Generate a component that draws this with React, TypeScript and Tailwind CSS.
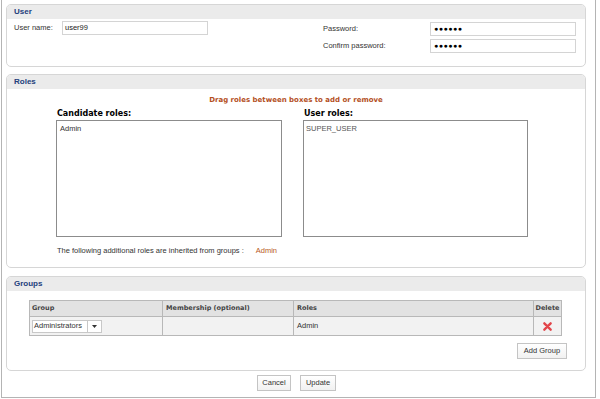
import React from "react";

const font = { fontFamily: '"Liberation Sans", Arial, sans-serif' };
const boldFont = { fontFamily: '"DejaVu Sans", Verdana, sans-serif' };

function Panel({ title, children, className }: { title: string; children: React.ReactNode; className?: string }) {
  return (
    <div className={"w-[580px] rounded-[5px] border border-[#d6d6d6] overflow-hidden bg-white " + (className || "")}>
      <div className="h-[14px] bg-[#ebebeb] flex items-center pl-[7px]">
        <span className="text-[8px] font-bold text-[#23407c] leading-none">{title}</span>
      </div>
      {children}
    </div>
  );
}

function Btn({ label, w }: { label: string; w: string }) {
  return (
    <div className={"h-[16px] border border-[#c4c4c4] bg-gradient-to-b from-white to-[#f1f1f1] flex items-center justify-center text-[7.5px] text-[#333] " + w}>
      {label}
    </div>
  );
}

export default function App() {
  return (
    <div className="w-[600px] h-[399px] bg-white overflow-hidden" style={font}>
      <div className="ml-[1px] w-[595px] h-[398px] border-l border-r border-b border-[#b4b4b4] pl-[4px] pt-[4px]">
        {/* User */}
        <Panel title="User" className="h-[63px]">
          <div className="flex pl-[7px] pt-[2px] text-[7.5px] text-[#333]">
            <div className="flex items-start w-[309px]">
              <span className="w-[48px] pt-[2px] leading-[10px]">User name:</span>
              <div className="w-[146px] h-[14px] border border-[#d4d4d4] flex items-center pl-[2px] text-[#222]">user99</div>
            </div>
            <div className="flex flex-col gap-[3px] pt-[1px]">
              <div className="flex items-center">
                <span className="w-[107px]">Password:</span>
                <div className="w-[146px] h-[14px] border border-[#d4d4d4] flex items-center pl-[3px] text-[7px] font-bold text-black tracking-[0.5px]">●●●●●●</div>
              </div>
              <div className="flex items-center">
                <span className="w-[107px]">Confirm password:</span>
                <div className="w-[146px] h-[14px] border border-[#d4d4d4] flex items-center pl-[3px] text-[7px] font-bold text-black tracking-[0.5px]">●●●●●●</div>
              </div>
            </div>
          </div>
        </Panel>

        {/* Roles */}
        <Panel title="Roles" className="h-[194px] mt-[7px]">
          <div className="text-center pt-[8px] text-[7px] font-bold text-[#b4501e] leading-none" style={boldFont}>
            Drag roles between boxes to add or remove
          </div>
          <div className="flex pl-[49px] pt-[5px] gap-[21px]">
            <div className="flex flex-col">
              <span className="text-[8px] font-bold text-black leading-[9px] pl-[1px]" style={boldFont}>Candidate roles:</span>
              <div className="mt-[2px] w-[226px] h-[117px] border border-[#8c8c8c] pl-[3px] pt-[4px] text-[7.5px] text-[#333] leading-none">Admin</div>
            </div>
            <div className="flex flex-col">
              <span className="text-[8px] font-bold text-black leading-[9px] pl-[1px]" style={boldFont}>User roles:</span>
              <div className="mt-[2px] w-[225px] h-[117px] border border-[#8c8c8c] pl-[2px] pt-[4px] text-[7.5px] text-[#555] leading-none">SUPER_USER</div>
            </div>
          </div>
          <div className="pl-[50px] pt-[10px] text-[7.5px] text-[#333] flex leading-none">
            <span>The following additional roles are inherited from groups :</span>
            <span className="ml-[12px] text-[#b85a22]">Admin</span>
          </div>
        </Panel>

        {/* Groups */}
        <Panel title="Groups" className="h-[95px] mt-[8px]">
          <div className="pl-[22px] pt-[9px]">
            <div className="w-[533px] border border-[#b8b8b8] text-[7.5px]">
              <div className="flex h-[16px] bg-[#e2e2e2] border-b border-[#b8b8b8] font-bold text-[#444] text-[6.5px]" style={boldFont}>
                <div className="w-[133px] border-r border-[#b8b8b8] flex items-center pl-[2px]">Group</div>
                <div className="w-[131px] border-r border-[#b8b8b8] flex items-center pl-[3px]">Membership (optional)</div>
                <div className="w-[240px] border-r border-[#b8b8b8] flex items-center pl-[3px]">Roles</div>
                <div className="flex-1 flex items-center justify-center">Delete</div>
              </div>
              <div className="flex h-[18px] bg-[#f2f2f2] text-[#333]">
                <div className="w-[133px] border-r border-[#b8b8b8] flex items-center pl-[2px]">
                  <div className="flex h-[13px] border border-[#c8c8c8] bg-white">
                    <div className="w-[55px] border-r border-[#c8c8c8] flex items-center pl-[1px]">Administrators</div>
                    <div className="w-[13px] flex items-center justify-center">
                      <svg width="5" height="3" viewBox="0 0 5 3"><path d="M0 0h5L2.5 3z" fill="#333" /></svg>
                    </div>
                  </div>
                </div>
                <div className="w-[131px] border-r border-[#b8b8b8]"></div>
                <div className="w-[240px] border-r border-[#b8b8b8] flex items-center pl-[3px]">Admin</div>
                <div className="flex-1 flex items-center justify-center">
                  <svg width="9" height="9" viewBox="0 0 10 10">
                    <path d="M1.5 1.5L8.5 8.5M8.5 1.5L1.5 8.5" stroke="#e2454a" strokeWidth="2.6" strokeLinecap="round" />
                  </svg>
                </div>
              </div>
            </div>
            <div className="flex justify-end w-[538px] mt-[7px]">
              <Btn label="Add Group" w="w-[50px]" />
            </div>
          </div>
        </Panel>

        <div className="flex pl-[251px] gap-[9px] mt-[4px]">
          <Btn label="Cancel" w="w-[34px]" />
          <Btn label="Update" w="w-[36px]" />
        </div>
      </div>
    </div>
  );
}
